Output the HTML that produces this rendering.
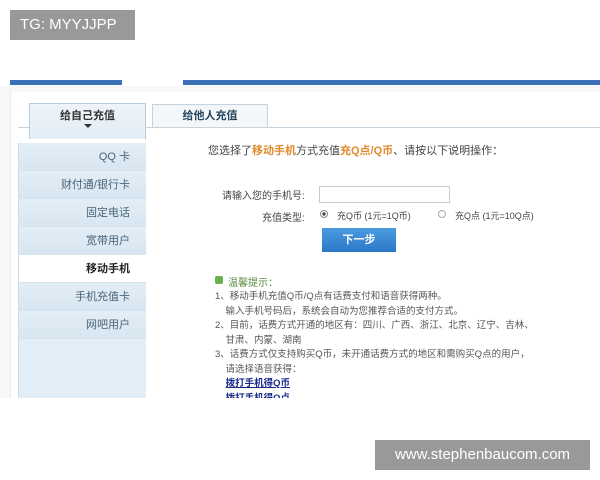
<!DOCTYPE html>
<html><head><meta charset="utf-8"><style>
*{margin:0;padding:0;box-sizing:border-box}
body{width:600px;height:480px;background:#fff;position:relative;overflow:hidden;font-family:"Liberation Sans","Noto Sans CJK SC",sans-serif;font-size:10px;color:#333}
.a{position:absolute}
.sb div{height:28px;border-bottom:1px solid #d6e2ec;text-align:right;padding-right:16px;line-height:28px;color:#4a6478;font-size:11px;background:linear-gradient(#e3eef6,#d8e6f1)}
</style></head><body>
<div class="a" style="left:10px;top:10px;width:125px;height:30px;background:#999;color:#fff;font-size:15px;line-height:30px;padding-left:10px">TG: MYYJJPP</div>
<div class="a" style="left:0;top:86px;width:600px;height:312px;background:#f5f7f9"></div>
<div class="a" style="left:10px;top:80px;width:112px;height:5px;background:#3b6fb8"></div>
<div class="a" style="left:183px;top:80px;width:417px;height:5px;background:#3b6fb8"></div>
<div class="a" style="left:10px;top:92px;width:590px;height:306px;background:#fff;border-left:1px solid #e6ecf1"></div>
<div class="a" style="left:18px;top:127px;width:582px;height:1px;background:#c5d3df"></div>
<div class="a" style="left:29px;top:103px;width:117px;height:36px;background:linear-gradient(#eef4f9,#e3edf5);border:1px solid #b9cbd9;border-bottom:none;text-align:center;font-weight:bold;font-size:11px;line-height:24px;color:#333">给自己充值</div>
<div class="a" style="left:84px;top:124px;width:0;height:0;border:4px solid transparent;border-top-color:#333"></div>
<div class="a" style="left:152px;top:104px;width:116px;height:23px;background:#f3f7fa;border:1px solid #c4d2dd;border-bottom:none;text-align:center;font-weight:bold;font-size:11px;line-height:22px;color:#24465f">给他人充值</div>
<div class="a sb" style="left:18px;top:143px;width:128px;height:255px;background:#e2eef7;border-left:1px solid #cfdbe5">
<div>QQ 卡</div><div>财付通/银行卡</div><div>固定电话</div><div>宽带用户</div>
<div style="background:#fff;color:#222;font-weight:bold">移动手机</div><div>手机充值卡</div><div>网吧用户</div></div>
<div class="a" style="left:208px;top:142px;font-size:11px;color:#444">您选择了<b style="color:#e08a2c">移动手机</b>方式充值<b style="color:#e08a2c">充Q点/Q币</b>、请按以下说明操作：</div>
<div class="a" style="left:222px;top:187px;color:#444">请输入您的手机号:</div>
<div class="a" style="left:319px;top:186px;width:131px;height:17px;border:1px solid #c9c9c9;background:#fff"></div>
<div class="a" style="left:262px;top:209px;color:#444">充值类型:</div>
<div class="a" style="left:320px;top:210px;width:8px;height:8px;border-radius:50%;border:1px solid #888;background:radial-gradient(#444 35%,#fff 45%)"></div>
<div class="a" style="left:337px;top:209px;font-size:9px;color:#444">充Q币 (1元=1Q币)</div>
<div class="a" style="left:438px;top:210px;width:8px;height:8px;border-radius:50%;border:1px solid #aaa;background:#fff"></div>
<div class="a" style="left:455px;top:209px;font-size:9px;color:#444">充Q点 (1元=10Q点)</div>
<div class="a" style="left:322px;top:228px;width:74px;height:24px;background:linear-gradient(#4a9be0,#2c78c8);color:#fff;font-weight:bold;font-size:11px;text-align:center;line-height:24px">下一步</div>
<div class="a" style="left:215px;top:276px;width:8px;height:8px;background:#6ab04c;border-radius:2px"></div>
<div class="a" style="left:228px;top:274px;font-size:10px;color:#5a8a3a">温馨提示：</div>
<div class="a" style="left:215px;top:290px;font-size:9.5px;line-height:14.5px;color:#555">
1、移动手机充值Q币/Q点有话费支付和语音获得两种。<br>
&nbsp;&nbsp;&nbsp;&nbsp;输入手机号码后，系统会自动为您推荐合适的支付方式。<br>
2、目前，话费方式开通的地区有：四川、广西、浙江、北京、辽宁、吉林、<br>
&nbsp;&nbsp;&nbsp;&nbsp;甘肃、内蒙、湖南<br>
3、话费方式仅支持购买Q币，未开通话费方式的地区和需购买Q点的用户，<br>
&nbsp;&nbsp;&nbsp;&nbsp;请选择语音获得：<br>
&nbsp;&nbsp;&nbsp;&nbsp;<u style="color:#1a2a8a;font-weight:bold">拨打手机得Q币</u><br>
&nbsp;&nbsp;&nbsp;&nbsp;<u style="color:#1a2a8a;font-weight:bold">拨打手机得Q点</u></div>
<div class="a" style="left:0;top:398px;width:600px;height:82px;background:#fff"></div>
<div class="a" style="left:375px;top:440px;width:215px;height:30px;background:#999;color:#fff;font-size:15px;line-height:30px;text-align:center">www.stephenbaucom.com</div>
</body></html>
